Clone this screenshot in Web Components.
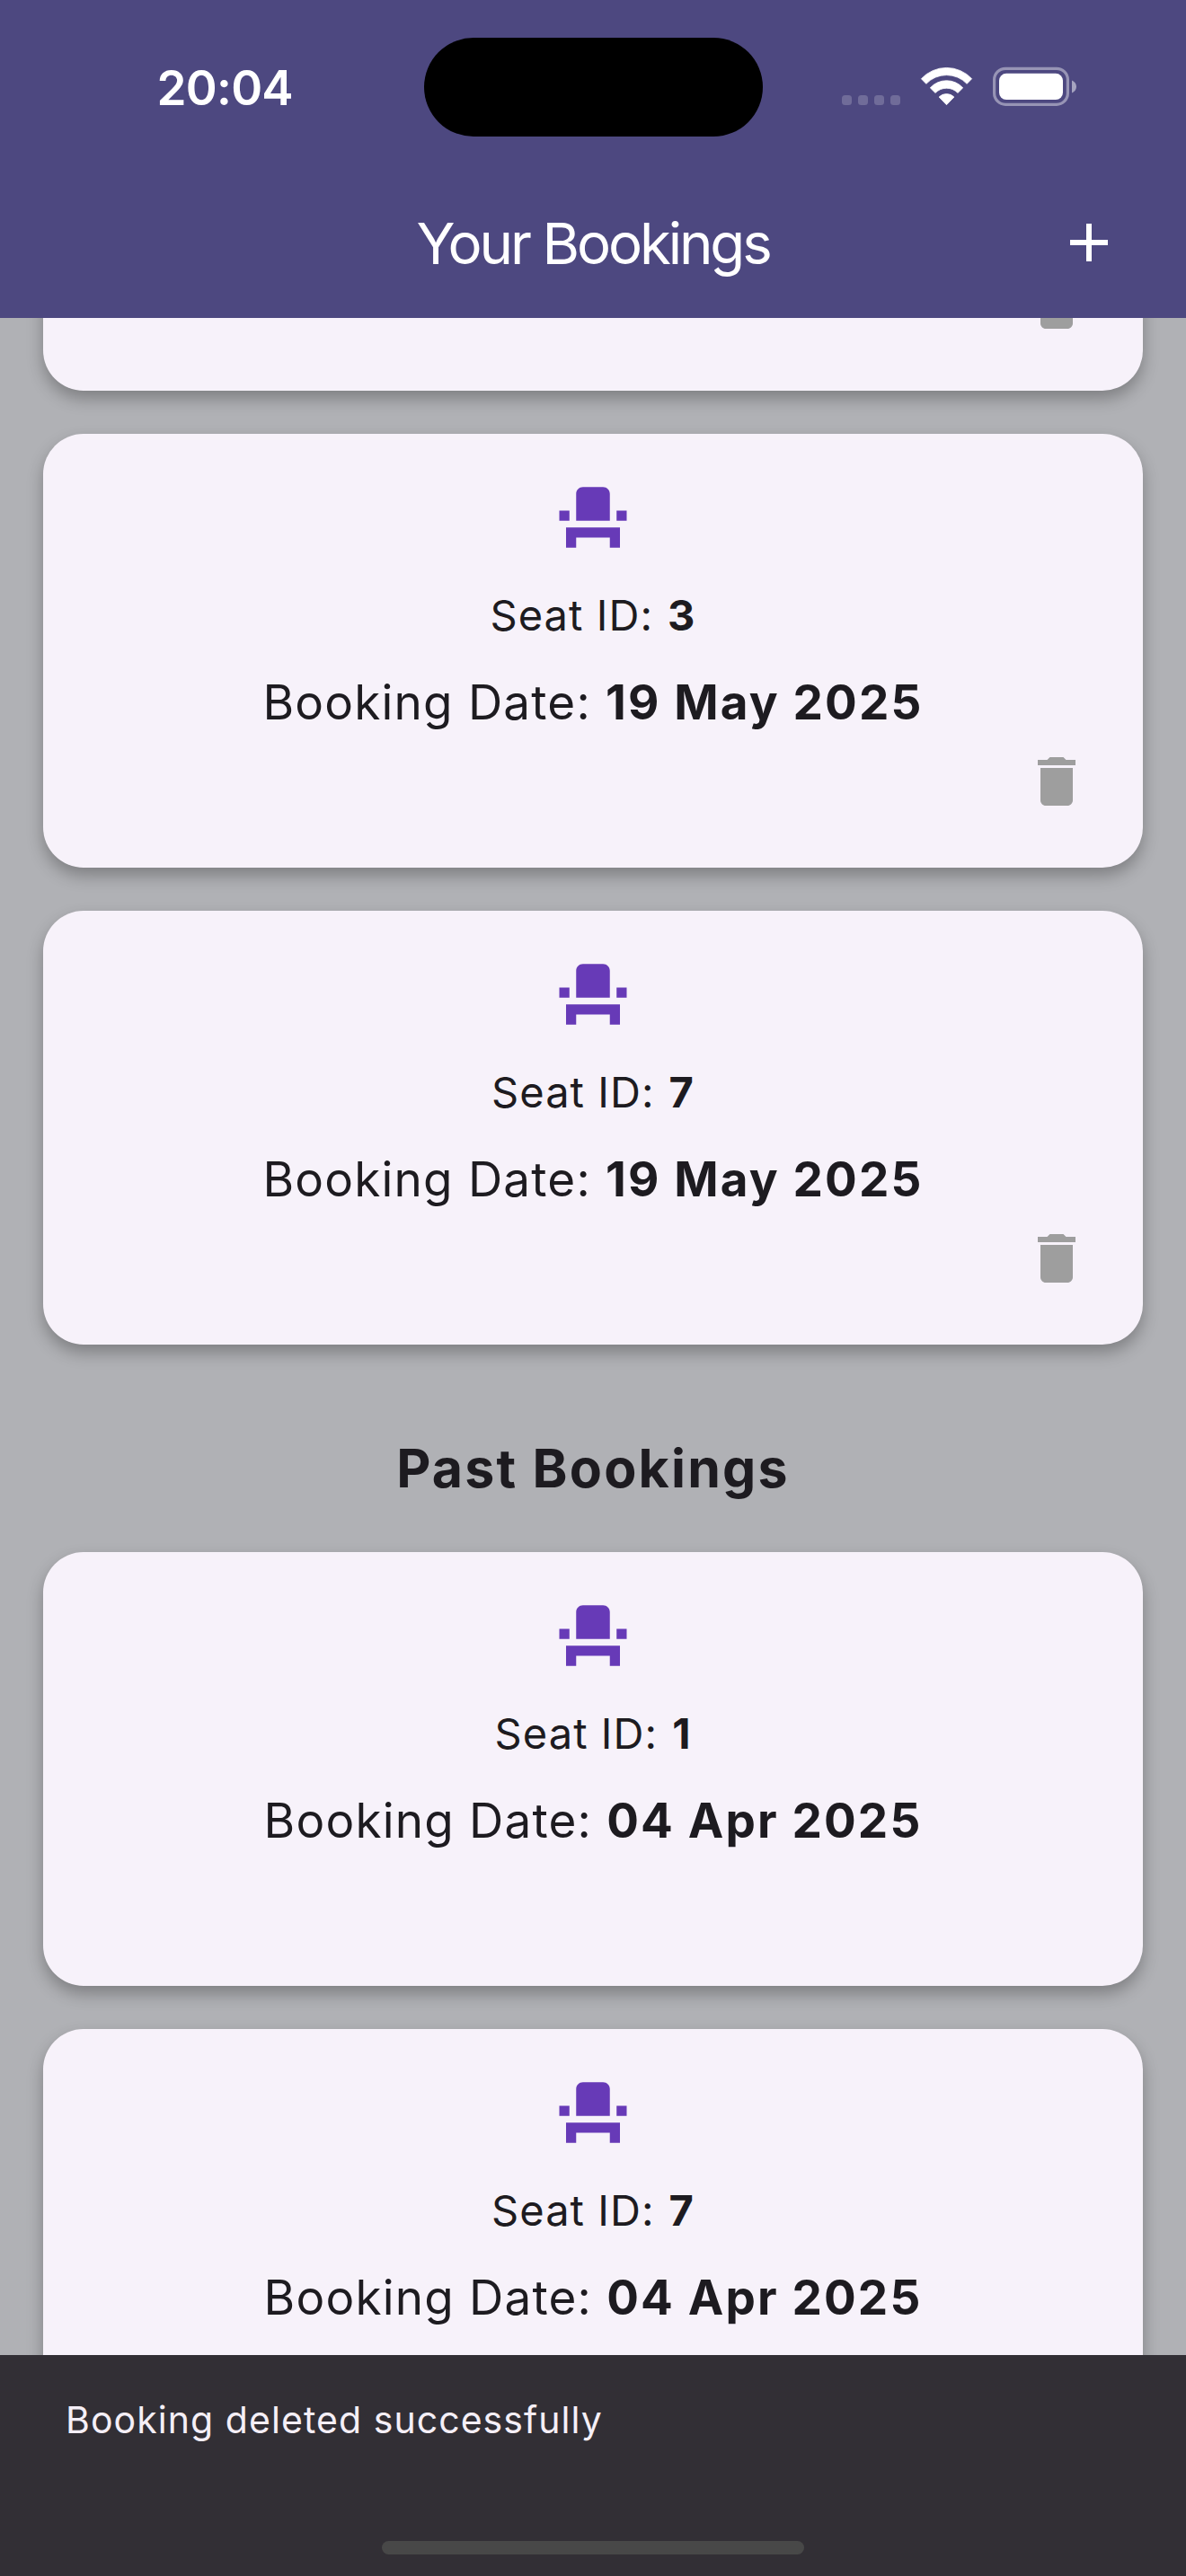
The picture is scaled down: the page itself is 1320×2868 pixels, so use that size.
<!DOCTYPE html>
<html lang="en">
<head>
<meta charset="utf-8">
<title>Your Bookings</title>
<style>
  html, body { margin: 0; padding: 0; }
  body { width: 1320px; height: 2868px; overflow: hidden; font-family: Inter, "Liberation Sans", sans-serif; color: #1d1b20; }
</style>
</head>
<body>
<bookings-app>
  <status-bar slot="top">20:04</status-bar>
  <app-bar slot="top">Your Bookings</app-bar>
  <booking-card tail deletable></booking-card>
  <booking-card seat="3" date="19 May 2025" deletable></booking-card>
  <booking-card seat="7" date="19 May 2025" deletable></booking-card>
  <section-title>Past Bookings</section-title>
  <booking-card seat="1" date="04 Apr 2025"></booking-card>
  <booking-card seat="7" date="04 Apr 2025"></booking-card>
  <snack-bar slot="bottom">Booking deleted successfully</snack-bar>
</bookings-app>

<script>
  const define = (name, markup) => customElements.define(name, class extends HTMLElement {
    constructor() {
      super();
      this.attachShadow({ mode: 'open' }).innerHTML = markup;
    }
  });

  define('bookings-app', `
    <style>
      :host { display: flex; flex-direction: column; width: 1320px; height: 2868px; background: #b0b1b5; }
      header { flex: none; background: #4d4880; }
      main { flex: 1; min-height: 0; overflow: hidden; display: flex; flex-direction: column; gap: 48px; padding: 0 48px; }
      footer { flex: none; }
    </style>
    <header><slot name="top"></slot></header>
    <main><slot></slot></main>
    <footer><slot name="bottom"></slot></footer>`);

  define('status-bar', `
    <style>
      :host { display: flex; align-items: center; box-sizing: border-box; height: 186px; padding: 8px 0 0 174.5px; color: #fff; }
      time { width: 297px; padding-top: 2px; font-size: 53px; line-height: 64px; font-weight: 600; letter-spacing: -.75px; }
      .island { width: 377px; height: 110px; border-radius: 55px; background: #000; }
      svg { margin-left: 88.5px; overflow: visible; }
    </style>
    <time><slot></slot></time>
    <div class="island"></div>
    <svg width="261" height="44" viewBox="0 0 261 44" fill="#fff">
      <g fill-opacity=".2">
        <rect x="0" y="31" width="11" height="11" rx="3.5"/>
        <rect x="18" y="31" width="11" height="11" rx="3.5"/>
        <rect x="36" y="31" width="11" height="11" rx="3.5"/>
        <rect x="54" y="31" width="11" height="11" rx="3.5"/>
      </g>
      <g transform="translate(88 0)" stroke="#fff" stroke-width=".8" stroke-linejoin="round">
        <path d="M.4 12.7A38.3 38.3 0 0 1 56.6 12.7L51.2 18.3A31.4 31.4 0 0 0 5.8 18.3Z"/>
        <path d="M10.3 22.8A24.6 24.6 0 0 1 46.7 22.8L41 28.4A17.6 17.6 0 0 0 16 28.4Z"/>
        <path d="M20.1 33A12 12 0 0 1 36.9 33L28.5 41.7Z"/>
      </g>
      <rect x="169.6" y="1.3" width="81.8" height="40" rx="12.5" fill="none" stroke="#fff" stroke-opacity=".42" stroke-width="3.2"/>
      <rect x="175" y="6.8" width="71" height="29.2" rx="8"/>
      <path d="M256 14.6c3 1.200 5 3.800 5 6.900s-2 5.700-5 6.900z" fill-opacity=".5"/>
    </svg>`);

  define('app-bar', `
    <style>
      :host { display: grid; grid-template-columns: 1fr auto 1fr; align-items: center; height: 168px; padding: 0 72px; color: #fff; }
      h1 { grid-column: 2; margin: 2px 0 0; font-size: 63.500px; line-height: 84px; font-weight: 400; letter-spacing: -3.1px; }
      svg { justify-self: end; }
    </style>
    <h1><slot></slot></h1>
    <svg width="72" height="72" viewBox="0 0 24 24" fill="#fff"><path d="M19 13h-6v6h-2v-6H5v-2h6V5h2v6h6v2z"/></svg>`);

  define('section-title', `
    <style>
      :host { display: block; flex: none; margin: 54px 0 9px; text-align: center; font-size: 59px; line-height: 72px; font-weight: 700; letter-spacing: 2.2px; }
    </style>
    <slot></slot>`);

  customElements.define('booking-card', class extends HTMLElement {
    constructor() {
      super();
      const tail = this.hasAttribute('tail');
      const seat = this.getAttribute('seat');
      const date = this.getAttribute('date');
      const bin = '<svg class="bin" width="72" height="72" viewBox="0 0 24 24" fill="#9e9e9e"><path d="M6 19c0 1.100.9 2 2 2h8c1.100 0 2-.9 2-2V7H6v12zM19 4h-3.500l-1-1h-5l-1 1H5v2h14V4z"/></svg>';
      this.attachShadow({ mode: 'open' }).innerHTML = `
        <style>
          :host { display: flex; flex: none; flex-direction: column; align-items: center; box-sizing: border-box; height: 483px; padding: 48px 60px 60px; border-radius: 45px; background: #f7f2fa; box-shadow: 0 9px 18px rgba(0, 0, 0, .28); }
          :host([tail]) { justify-content: flex-end; height: 141px; margin-top: -60px; padding-top: 0; }
          svg { display: block; flex: none; }
          p { margin: 0; white-space: pre; font-weight: 400; }
          .seat { margin-top: 28px; font-size: 47px; line-height: 72px; letter-spacing: 1.07px; }
          .seat b { margin-left: 1.700px; }
          .date { margin-top: 21px; font-size: 53px; line-height: 80px; letter-spacing: 1.200px; }
          .date b { letter-spacing: 2.150px; }
          b { font-weight: 700; }
          .bin { align-self: flex-end; margin-top: 12px; }
        </style>
        ${tail ? '' : `
        <svg width="90" height="90" viewBox="0 0 24 24" fill="#673ab7"><path d="M4 18v3h3v-3h10v3h3v-6H4zm15-8h3v3h-3zM2 10h3v3H2zm15 3H7V5c0-1.100.9-2 2-2h6c1.100 0 2 .9 2 2v8z"/></svg>
        <p class="seat">Seat ID: <b>${seat}</b></p>
        <p class="date">Booking Date: <b>${date}</b></p>`}
        ${this.hasAttribute('deletable') ? bin : ''}`;
    }
  });

  define('snack-bar', `
    <style>
      :host { display: flex; flex-direction: column; justify-content: space-between; box-sizing: border-box; height: 246px; padding: 42px 0 24px 73px; background: #322f35; color: #f5eff7; font-size: 41px; line-height: 60px; letter-spacing: 1.060px; }
      .home { width: 470px; height: 15px; margin-left: 352px; border-radius: 7.500px; background: #484848; }
    </style>
    <div><slot></slot></div>
    <div class="home"></div>`);
</script>
</body>
</html>
